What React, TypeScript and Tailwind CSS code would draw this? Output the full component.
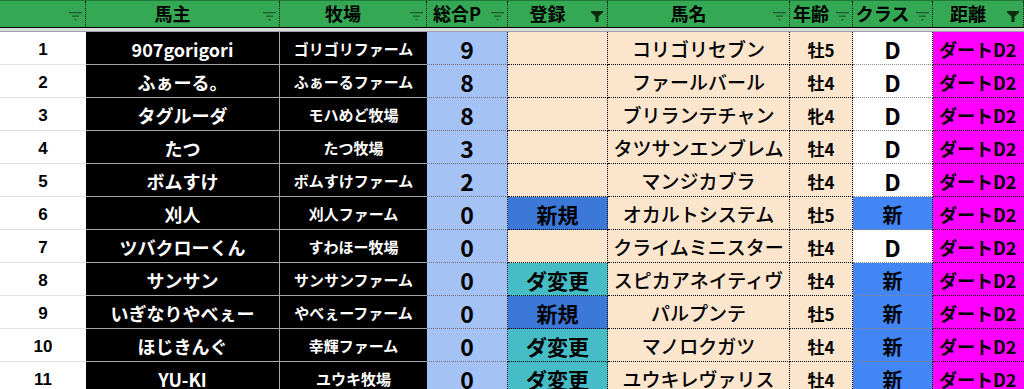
import React from 'react';

type Row = {
  no: number;
  owner: string;
  farm: string;
  pt: number;
  reg: '' | '新規' | 'ダ変更';
  horse: string;
  age: string;
  cls: 'D' | '新';
};

const rows: Row[] = [
  { no: 1, owner: '907gorigori', farm: 'ゴリゴリファーム', pt: 9, reg: '', horse: 'コリゴリセブン', age: '牡5', cls: 'D' },
  { no: 2, owner: 'ふぁーる。', farm: 'ふぁーるファーム', pt: 8, reg: '', horse: 'ファールバール', age: '牡4', cls: 'D' },
  { no: 3, owner: 'タグルーダ', farm: 'モハめど牧場', pt: 8, reg: '', horse: 'ブリランテチャン', age: '牝4', cls: 'D' },
  { no: 4, owner: 'たつ', farm: 'たつ牧場', pt: 3, reg: '', horse: 'タツサンエンブレム', age: '牡4', cls: 'D' },
  { no: 5, owner: 'ボムすけ', farm: 'ボムすけファーム', pt: 2, reg: '', horse: 'マンジカブラ', age: '牡4', cls: 'D' },
  { no: 6, owner: '刈人', farm: '刈人ファーム', pt: 0, reg: '新規', horse: 'オカルトシステム', age: '牡5', cls: '新' },
  { no: 7, owner: 'ツバクローくん', farm: 'すわほー牧場', pt: 0, reg: '', horse: 'クライムミニスター', age: '牡4', cls: 'D' },
  { no: 8, owner: 'サンサン', farm: 'サンサンファーム', pt: 0, reg: 'ダ変更', horse: 'スピカアネイティヴ', age: '牡4', cls: '新' },
  { no: 9, owner: 'いぎなりやべぇー', farm: 'やべぇーファーム', pt: 0, reg: '新規', horse: 'パルプンテ', age: '牡5', cls: '新' },
  { no: 10, owner: 'ほじきんぐ', farm: '幸輝ファーム', pt: 0, reg: 'ダ変更', horse: 'マノロクガツ', age: '牡4', cls: '新' },
  { no: 11, owner: 'YU-KI', farm: 'ユウキ牧場', pt: 0, reg: 'ダ変更', horse: 'ユウキレヴァリス', age: '牡4', cls: '新' },
];

const cols = 'grid grid-cols-[86px_194px_147px_81px_100px_182px_63px_80px_91px]';

function FilterLines() {
  return (
    <svg width="13" height="9" viewBox="0 0 13 9" className="shrink-0">
      <rect x="0" y="0" width="13" height="1.3" fill="#1f5a30" />
      <rect x="3" y="3.5" width="7" height="1.3" fill="#1f5a30" />
      <rect x="5.5" y="7" width="2" height="1.3" fill="#1f5a30" />
    </svg>
  );
}

function FilterFunnel() {
  return (
    <svg width="12" height="11" viewBox="0 0 12 11" className="shrink-0">
      <path d="M0 0 H12 V1.5 L7.5 5.5 V11 H4.5 V5.5 L0 1.5 Z" fill="#0b2a14" />
    </svg>
  );
}

function Head({ label, active }: { label?: string; active?: boolean }) {
  return (
    <div className="flex items-center border-r border-dotted border-black h-full">
      <span className="flex-1 text-center text-[18px] font-bold text-black leading-none pb-[3px]">{label}</span>
      <span className="w-[20px] flex justify-center pt-[5px]">
        {active ? <FilterFunnel /> : <FilterLines />}
      </span>
    </div>
  );
}

const center = 'flex items-center justify-center pt-[3px] whitespace-nowrap overflow-hidden';

export default function App() {
  return (
    <div className="w-[1024px] h-[389px] overflow-hidden bg-white font-['Noto_Sans_CJK_JP','Noto_Sans',sans-serif]">
      {/* header */}
      <div className={`${cols} h-[28px] bg-[#34a853] border-t border-[#1e7a3a] border-b border-b-black`}>
        <Head />
        <Head label="馬主" />
        <Head label="牧場" />
        <Head label="総合P" />
        <Head label="登録" active />
        <Head label="馬名" />
        <Head label="年齢" />
        <Head label="クラス" />
        <Head label="距離" active />
      </div>
      <div className="h-[3px] bg-[#dadce0]" />
      <div className="h-[1px] bg-[#9aa0a6]" />

      {rows.map((r) => (
        <div key={r.no} className={`${cols} h-[33px]`}>
          <div className={`${center} bg-white border-b border-[#e2e2e2] text-[17px] font-bold text-black font-['Liberation_Sans',sans-serif]`}>
            {r.no}
          </div>
          <div className={`${center} bg-black border-b border-r border-[#a8a8a8] text-[18px] font-bold text-white`}>
            {r.owner}
          </div>
          <div className={`${center} bg-black border-b border-[#a8a8a8] text-[15px] font-bold text-white`}>
            {r.farm}
          </div>
          <div className={`${center} bg-[#a4c2f4] border-b border-dotted border-b-[#6f6f6f] border-r border-r-black text-[23px] font-bold text-black`}>
            {r.pt}
          </div>
          <div
            className={`${center} border-b border-r border-dotted border-black text-[21px] font-bold text-black ${
              r.reg === '新規' ? 'bg-[#3c78d8]' : r.reg === 'ダ変更' ? 'bg-[#46bdc6]' : 'bg-[#fce5cd]'
            }`}
          >
            {r.reg}
          </div>
          <div className={`${center} bg-[#fce5cd] border-b border-r border-dotted border-black text-[19px] font-medium text-black`}>
            {r.horse}
          </div>
          <div className={`${center} bg-[#fce5cd] border-b border-r border-dotted border-black text-[17px] font-bold text-black`}>
            {r.age}
          </div>
          <div
            className={`${center} border-b border-dotted border-b-[#8a8a8a] border-r border-r-black font-bold text-black ${
              r.cls === '新' ? 'bg-[#4285f4] text-[20px]' : 'bg-white text-[23px]'
            }`}
          >
            {r.cls}
          </div>
          <div className={`${center} bg-[#ff00ff] border-b border-dotted border-black text-[18px] font-bold text-black justify-start pl-[6px]`}>
            ダートD2
          </div>
        </div>
      ))}
    </div>
  );
}
